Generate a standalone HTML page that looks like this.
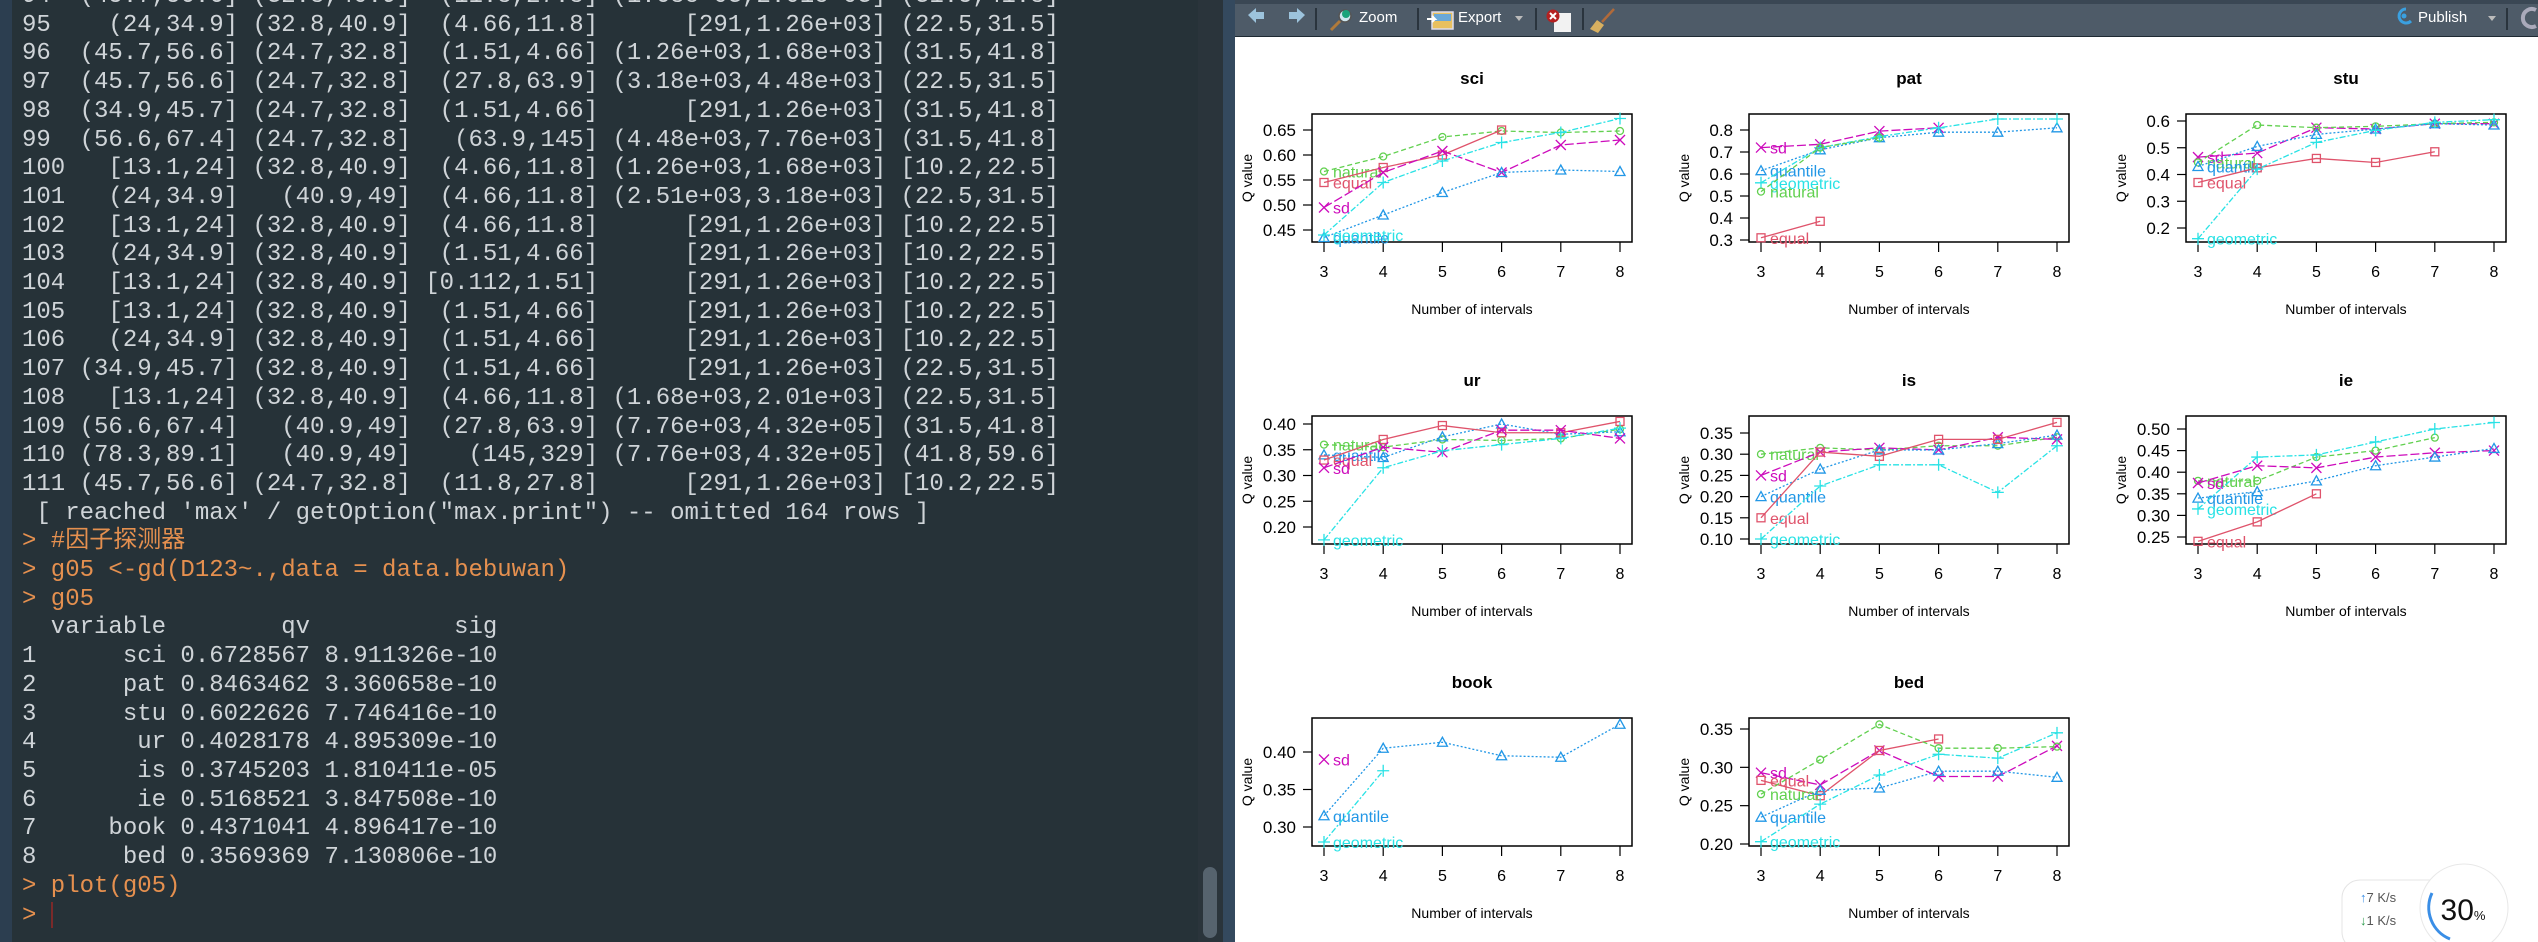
<!DOCTYPE html>
<html><head><meta charset="utf-8"><style>
html,body{margin:0;padding:0;width:2538px;height:942px;overflow:hidden;background:#263238;}
#con{position:absolute;left:0;top:0;width:1198px;height:942px;background:#263238;overflow:hidden;}
#strip{position:absolute;left:0;top:0;width:12px;height:942px;background:#2c3e50;}
#txt{position:absolute;left:22px;top:-17px;font-family:"Liberation Mono","Noto Sans CJK SC",monospace;font-size:24px;line-height:28.7px;color:#cfd4d8;white-space:pre;}
.o{color:#e5904f;}
#track{position:absolute;left:1198px;top:0;width:25px;height:942px;background:#2a343b;}
#thumb{position:absolute;left:1203px;top:867px;width:14px;height:71px;background:#56636e;border-radius:7px;}
#div{position:absolute;left:1223px;top:0;width:12px;height:942px;background:#34495e;}
#pane{position:absolute;left:1235px;top:0;width:1303px;height:942px;background:#fff;}
#tb{position:absolute;left:1235px;top:0;width:1303px;height:36px;background:#4e5b68;border-bottom:1px solid #1f2a33;}
#tabs{position:absolute;left:1235px;top:0;width:1303px;height:4px;background:#3a4754;}
.tbt{position:absolute;top:9px;font-family:"Liberation Sans",sans-serif;font-size:15px;color:#fff;}
svg{position:absolute;left:0;top:0;}
</style></head><body>
<div id="con"><div id="strip"></div>
<div id="txt">94  (45.7,56.6] (32.8,40.9]  (11.8,27.8] (1.68e+03,2.01e+03] (31.5,41.8]
95    (24,34.9] (32.8,40.9]  (4.66,11.8]      [291,1.26e+03] (22.5,31.5]
96  (45.7,56.6] (24.7,32.8]  (1.51,4.66] (1.26e+03,1.68e+03] (31.5,41.8]
97  (45.7,56.6] (24.7,32.8]  (27.8,63.9] (3.18e+03,4.48e+03] (22.5,31.5]
98  (34.9,45.7] (24.7,32.8]  (1.51,4.66]      [291,1.26e+03] (31.5,41.8]
99  (56.6,67.4] (24.7,32.8]   (63.9,145] (4.48e+03,7.76e+03] (31.5,41.8]
100   [13.1,24] (32.8,40.9]  (4.66,11.8] (1.26e+03,1.68e+03] [10.2,22.5]
101   (24,34.9]   (40.9,49]  (4.66,11.8] (2.51e+03,3.18e+03] (22.5,31.5]
102   [13.1,24] (32.8,40.9]  (4.66,11.8]      [291,1.26e+03] [10.2,22.5]
103   (24,34.9] (32.8,40.9]  (1.51,4.66]      [291,1.26e+03] [10.2,22.5]
104   [13.1,24] (32.8,40.9] [0.112,1.51]      [291,1.26e+03] [10.2,22.5]
105   [13.1,24] (32.8,40.9]  (1.51,4.66]      [291,1.26e+03] [10.2,22.5]
106   (24,34.9] (32.8,40.9]  (1.51,4.66]      [291,1.26e+03] [10.2,22.5]
107 (34.9,45.7] (32.8,40.9]  (1.51,4.66]      [291,1.26e+03] (22.5,31.5]
108   [13.1,24] (32.8,40.9]  (4.66,11.8] (1.68e+03,2.01e+03] (22.5,31.5]
109 (56.6,67.4]   (40.9,49]  (27.8,63.9] (7.76e+03,4.32e+05] (31.5,41.8]
110 (78.3,89.1]   (40.9,49]    (145,329] (7.76e+03,4.32e+05] (41.8,59.6]
111 (45.7,56.6] (24.7,32.8]  (11.8,27.8]      [291,1.26e+03] [10.2,22.5]
 [ reached 'max' / getOption("max.print") -- omitted 164 rows ]
<span class="o">&gt; #因子探测器</span>
<span class="o">&gt; g05 &lt;-gd(D123~.,data = data.bebuwan)</span>
<span class="o">&gt; g05</span>
  variable        qv          sig
1      sci 0.6728567 8.911326e-10
2      pat 0.8463462 3.360658e-10
3      stu 0.6022626 7.746416e-10
4       ur 0.4028178 4.895309e-10
5       is 0.3745203 1.810411e-05
6       ie 0.5168521 3.847508e-10
7     book 0.4371041 4.896417e-10
8      bed 0.3569369 7.130806e-10
<span class="o">&gt; plot(g05)</span>
<span class="o">&gt; </span><span style="display:inline-block;width:2px;height:26px;background:#7a2a2a;vertical-align:middle"></span></div>
</div>
<div id="track"></div><div id="thumb"></div><div id="div"></div>
<div id="pane"></div>
<div id="tb"></div><div id="tabs"></div>
<div class="tbt" style="left:1359px">Zoom</div>
<div class="tbt" style="left:1458px">Export</div>
<div class="tbt" style="left:2418px">Publish</div>
<svg id="s" width="2538" height="942" xmlns="http://www.w3.org/2000/svg">
<path d="M1248 15 l8 -7 v4 h8 v7 h-8 v4 z" fill="#9cc3dc"/>
<path d="M1305 15 l-8 -7 v4 h-8 v7 h8 v4 z" fill="#9cc3dc"/>
<line x1="1316" y1="8" x2="1316" y2="30" stroke="#2a343d" stroke-width="2"/>
<line x1="1331" y1="30" x2="1340" y2="21" stroke="#b07a3a" stroke-width="3"/>
<circle cx="1345" cy="16" r="6" fill="#cfe6ee" stroke="#555" stroke-width="1.5"/>
<circle cx="1346" cy="14" r="4" fill="#1aa37a"/>
<line x1="1418" y1="8" x2="1418" y2="30" stroke="#2a343d" stroke-width="2"/>
<rect x="1432" y="12" width="21" height="17" fill="#e8c060" stroke="#dde" stroke-width="1.5"/>
<rect x="1434" y="14" width="17" height="7" fill="#6aa8d8"/>
<path d="M1427 19 h8 l-3 -3 m3 3 l-3 3" stroke="#fff" stroke-width="2" fill="none"/>
<path d="M1515 16 h8 l-4 5 z" fill="#bbb"/>
<line x1="1536" y1="8" x2="1536" y2="30" stroke="#2a343d" stroke-width="2"/>
<rect x="1554" y="13" width="17" height="19" fill="#f2f2f2"/>
<circle cx="1553" cy="16" r="6.5" fill="#b52020"/>
<path d="M1550 13 l6 6 m0 -6 l-6 6" stroke="#fff" stroke-width="2"/>
<line x1="1583" y1="8" x2="1583" y2="30" stroke="#2a343d" stroke-width="2"/>
<line x1="1614" y1="9" x2="1602" y2="22" stroke="#b06a3a" stroke-width="2.5"/>
<path d="M1597 20 l7 5 l-6 8 l-8 -4 z" fill="#d8b060"/>
<path d="M2406 9 a7 7 0 1 0 5 12" stroke="#3aa0e0" stroke-width="3" fill="none"/>
<circle cx="2404" cy="16" r="2.5" fill="#3aa0e0"/>
<path d="M2488 16 h8 l-4 5 z" fill="#bbb"/>
<line x1="2507" y1="8" x2="2507" y2="30" stroke="#2a343d" stroke-width="2"/>
<path d="M2536 10 a9 9 0 1 0 0 16" stroke="#aab" stroke-width="4" fill="none"/>
<rect x="2342" y="880" width="130" height="70" rx="18" fill="#fff" stroke="#e4e4e4"/>
<circle cx="2464" cy="908" r="44" fill="#fff" stroke="#e8e8e8"/>
<path d="M2432 893 a34 34 0 0 0 18 46" stroke="#3a8ee6" stroke-width="3" fill="none"/>
<text x="2463" y="920" font-family="Liberation Sans,sans-serif" font-size="30" text-anchor="middle" fill="#111">30<tspan font-size="13">%</tspan></text>
<text x="2360" y="902" font-family="Liberation Sans,sans-serif" font-size="13" fill="#555"><tspan fill="#3a8ee6">↑</tspan>7  K/s</text>
<text x="2360" y="925" font-family="Liberation Sans,sans-serif" font-size="13" fill="#555"><tspan fill="#2a9a4a">↓</tspan>1  K/s</text>
<g id="plots"></g>
</svg>
<script>
var C={equal:"#DF536B",natural:"#61D04F",quantile:"#2297E6",geometric:"#28E2E5",sd:"#CD0BBC"};
var D={equal:"",natural:"5,3",quantile:"2,2",geometric:"6,2,2,2",sd:"9,3"};
var P=[
{t:"sci",c:0,r:0,v1:0.65,y1:16,v2:0.45,y2:116,ticks:[0.45,0.5,0.55,0.6,0.65],dp:2,
 s:{natural:[.567,.597,.636,.648,.645,.648],equal:[.545,.575,.60,.65],sd:[.495,.565,.608,.565,.62,.63],quantile:[.435,.48,.525,.565,.57,.567],geometric:[.44,.545,.588,.625,.645,.673]}},
{t:"pat",c:1,r:0,v1:0.8,y1:16,v2:0.3,y2:126,ticks:[0.3,0.4,0.5,0.6,0.7,0.8],dp:1,
 s:{sd:[.72,.735,.795,.81],quantile:[.615,.71,.765,.79,.79,.81],geometric:[.56,.72,.77,.81,.85,.85],natural:[.52,.72,.765],equal:[.31,.385]}},
{t:"stu",c:2,r:0,v1:0.6,y1:7,v2:0.2,y2:114,ticks:[0.2,0.3,0.4,0.5,0.6],dp:1,
 s:{sd:[.465,.48,.575,.57,.59,.59],natural:[.445,.585,.575,.58,.59,.595],quantile:[.43,.505,.55,.57,.59,.585],equal:[.37,.425,.46,.445,.485],geometric:[.16,.42,.52,.565,.595,.605]}},
{t:"ur",c:0,r:1,v1:0.40,y1:8,v2:0.20,y2:111,ticks:[0.2,0.25,0.3,0.35,0.4],dp:2,
 s:{natural:[.36,.355,.37,.368,.372,.39],quantile:[.34,.335,.375,.40,.38,.385],equal:[.33,.37,.397,.383,.383,.405],sd:[.315,.355,.345,.388,.388,.372],geometric:[.175,.315,.348,.36,.372,.392]}},
{t:"is",c:1,r:1,v1:0.35,y1:17,v2:0.10,y2:123,ticks:[0.1,0.15,0.2,0.25,0.3,0.35],dp:2,
 s:{natural:[.30,.315,.31,.32,.32,.34],sd:[.25,.305,.315,.31,.34,.335],quantile:[.20,.265,.31,.31,.325,.345],equal:[.15,.305,.295,.335,.335,.375],geometric:[.10,.225,.275,.275,.21,.32]}},
{t:"ie",c:2,r:1,v1:0.50,y1:13,v2:0.25,y2:121,ticks:[0.25,0.3,0.35,0.4,0.45,0.5],dp:2,
 s:{natural:[.38,.38,.435,.45,.48],sd:[.375,.415,.41,.435,.445,.45],quantile:[.34,.355,.38,.415,.435,.455],geometric:[.315,.435,.44,.47,.50,.515],equal:[.24,.285,.35]}},
{t:"book",c:0,r:2,v1:0.40,y1:34,v2:0.30,y2:109,ticks:[0.3,0.35,0.4],dp:2,
 s:{sd:[.39],quantile:[.315,.405,.413,.395,.393,.437],geometric:[.28,.375]}},
{t:"bed",c:1,r:2,v1:0.35,y1:11,v2:0.20,y2:126,ticks:[0.2,0.25,0.3,0.35],dp:2,
 s:{sd:[.293,.277,.322,.288,.288,.328],equal:[.283,.263,.322,.337],natural:[.265,.31,.356,.325,.325,.327],quantile:[.235,.27,.273,.295,.295,.287],geometric:[.203,.252,.29,.317,.312,.345]}}
];
var NS="http://www.w3.org/2000/svg",g=document.getElementById("plots");
function el(n,a,t){var e=document.createElementNS(NS,n);for(var k in a)e.setAttribute(k,a[k]);if(t!=null)e.textContent=t;g.appendChild(e);return e;}
var F="Liberation Sans,Arial,sans-serif";
function mark(m,x,y,col){
 var st={stroke:col,"stroke-width":1.3,fill:"none"};
 if(m=="equal"){st.x=x-4;st.y=y-4;st.width=8;st.height=8;el("rect",st);}
 else if(m=="natural"){st.cx=x;st.cy=y;st.r=3.5;el("circle",st);}
 else if(m=="quantile"){st.d="M"+x+" "+(y-5)+" l5 9 h-10 z";el("path",st);}
 else if(m=="geometric"){st.d="M"+(x-6)+" "+y+" h12 M"+x+" "+(y-6)+" v12";el("path",st);}
 else {st.d="M"+(x-5)+" "+(y-5)+" l10 10 M"+(x+5)+" "+(y-5)+" l-10 10";el("path",st);}
}
P.forEach(function(p){
 var L=1312+p.c*437,T=114+p.r*302,W=320,H=128;
 var k=(p.y2-p.y1)/(p.v1-p.v2);
 function Y(v){return T+p.y1+(p.v1-v)*k;}
 function X(i){return L+12+i*59.2;}
 el("text",{x:L+W/2,y:T-30,"font-family":F,"font-size":17,"font-weight":"bold","text-anchor":"middle",fill:"#000"},p.t);
 el("rect",{x:L,y:T,width:W,height:H,fill:"none",stroke:"#000","stroke-width":1.5});
 for(var i=0;i<6;i++){el("line",{x1:X(i),y1:T+H,x2:X(i),y2:T+H+10,stroke:"#000","stroke-width":1.2});
  el("text",{x:X(i),y:T+H+35,"font-family":F,"font-size":16,"text-anchor":"middle",fill:"#000"},String(i+3));}
 p.ticks.forEach(function(v){var y=Y(v);el("line",{x1:L-9,y1:y,x2:L,y2:y,stroke:"#000","stroke-width":1.2});
  el("text",{x:L-16,y:y+6,"font-family":F,"font-size":17,"text-anchor":"end",fill:"#000"},v.toFixed(p.dp));});
 el("text",{x:L+W/2,y:T+H+72,"font-family":F,"font-size":14,"text-anchor":"middle",fill:"#000"},"Number of intervals");
 var ty=T+H/2;el("text",{x:L-60,y:ty,"font-family":F,"font-size":14,"text-anchor":"middle",fill:"#000",transform:"rotate(-90 "+(L-60)+" "+ty+")"},"Q value");
 for(var m in p.s){var a=p.s[m],col=C[m],pts=a.map(function(v,i){return X(i)+","+Y(v);}).join(" ");
  if(a.length>1)el("polyline",{points:pts,fill:"none",stroke:col,"stroke-width":1.3,"stroke-dasharray":D[m]});
  a.forEach(function(v,i){mark(m,X(i),Y(v),col);});
  el("text",{x:X(0)+9,y:Y(a[0])+6,"font-family":F,"font-size":16,fill:col},m);}
});
</script>
</body></html>
